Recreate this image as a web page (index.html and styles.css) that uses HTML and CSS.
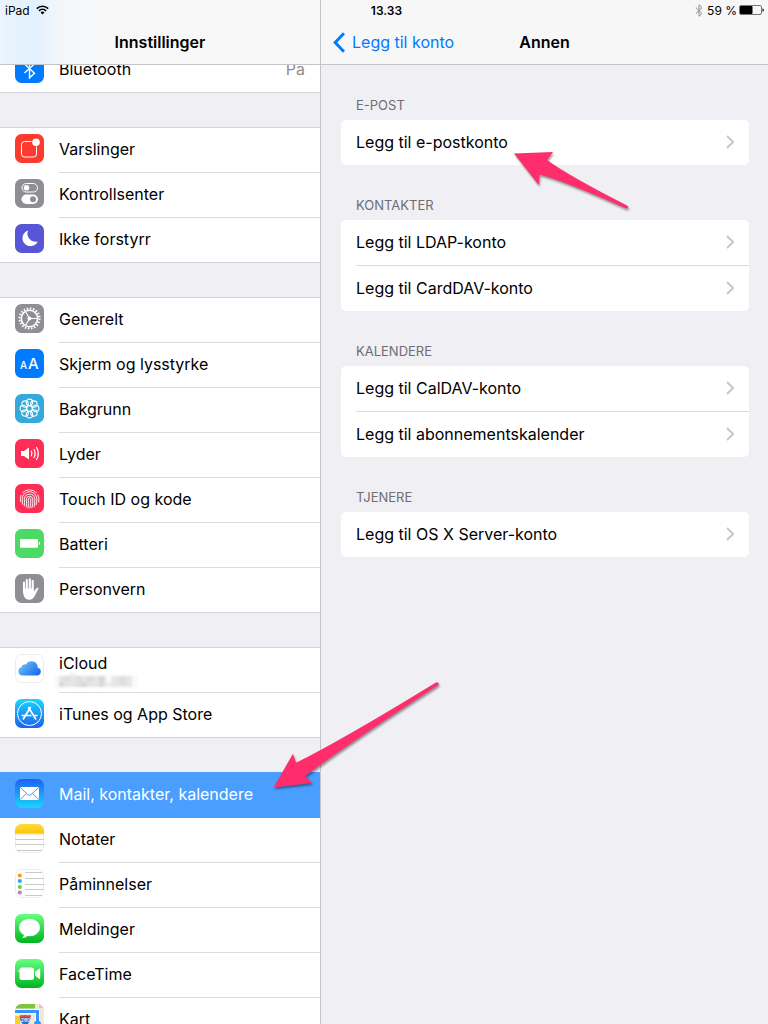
FILE: index.html
```html
<!DOCTYPE html>
<html lang="nb">
<head>
    <meta charset="utf-8">
    <title>Innstillinger</title>
    <link rel="stylesheet" href="styles.css">
</head>
<body>
    <div class="status-bar">
        <div class="status-left">
            <span>iPad</span>
            <svg width="13" height="10" viewBox="0 0 13 10" fill="none" stroke="#000" stroke-width="1.6">
                <path d="M0.8 3.6a8.2 8.2 0 0 1 11.4 0M2.9 5.8a5.2 5.2 0 0 1 7.2 0"/>
                <path d="M4.5 7.4a3 3 0 0 1 4 0L6.500 9.600z" fill="#000" stroke="none"/>
            </svg>
        </div>
        <div class="status-time">13.33</div>
        <div class="status-right">
            <svg width="8" height="13" viewBox="0 0 8 13" fill="none" stroke="#8e8e93" stroke-width="1">
                <path d="M0.800 3.500l6.200 6L4 12.300V0.800l3 2.800-6.200 6"/>
            </svg>
            <span>59 %</span>
            <svg width="25" height="10" viewBox="0 0 25 10">
                <rect x="0.500" y="0.500" width="22" height="9" rx="1.500" fill="none" stroke="#777"/>
                <rect x="1" y="1" width="12.500" height="8" rx="1"/>
                <path d="M23.500 3.200q1.300 0.400 1.300 1.800t-1.300 1.800z"/>
            </svg>
        </div>
    </div>

    <div class="app">
        <aside class="sidebar">
            <header class="header sidebar-header">
                <h1>Innstillinger</h1>
            </header>
            <nav class="sidebar-scroll">
                <ul class="menu-group">
                    <li>
                        <a href="#" class="menu-row">
                            <svg class="icon" viewBox="0 0 29 29">
                                <rect width="29" height="29" rx="6.500" fill="#007aff"/>
                                <path d="M9.500 10l10 9.200-5 4.600V5.200l5 4.600-10 9.200" fill="none" stroke="#fff" stroke-width="1.400"/>
                            </svg>
                            <span class="menu-label">Bluetooth <span class="menu-value">På</span></span>
                        </a>
                    </li>
                </ul>

                <ul class="menu-group">
                    <li>
                        <a href="#" class="menu-row">
                            <svg class="icon" viewBox="0 0 29 29">
                                <rect width="29" height="29" rx="6.500" fill="#ff3b30"/>
                                <path d="M16.500 7.500H9.500q-3 0-3 3v9.500q0 3 3 3h9q3 0 3-3v-7.500" fill="none" stroke="#fff" stroke-width="1"/>
                                <circle cx="21" cy="8.300" r="3.800" fill="#fff"/>
                            </svg>
                            <span class="menu-label">Varslinger</span>
                        </a>
                    </li>
                    <li>
                        <a href="#" class="menu-row">
                            <svg class="icon" viewBox="0 0 29 29">
                                <rect width="29" height="29" rx="6.500" fill="#8e8e93"/>
                                <rect x="7" y="4.500" width="15.500" height="8.500" rx="4.250" fill="none" stroke="#fff"/>
                                <circle cx="11.500" cy="8.750" r="2.800" fill="#fff"/>
                                <rect x="6.500" y="15.500" width="16.500" height="9.500" rx="4.750" fill="#fff"/>
                                <circle cx="18" cy="20.250" r="3" fill="#8e8e93"/>
                            </svg>
                            <span class="menu-label">Kontrollsenter</span>
                        </a>
                    </li>
                    <li>
                        <a href="#" class="menu-row">
                            <svg class="icon" viewBox="0 0 29 29">
                                <rect width="29" height="29" rx="6.500" fill="#5856d6"/>
                                <path d="M13.200 6.500A8 8 0 1 0 22.800 17.400A8 8 0 0 1 13.200 6.500z" fill="#fff"/>
                            </svg>
                            <span class="menu-label">Ikke forstyrr</span>
                        </a>
                    </li>
                </ul>

                <ul class="menu-group">
                    <li>
                        <a href="#" class="menu-row">
                            <svg class="icon" viewBox="0 0 29 29" fill="none" stroke="#fff">
                                <rect width="29" height="29" rx="6.500" fill="#8e8e93" stroke="none"/>
                                <circle cx="14.500" cy="14.500" r="10" stroke-width="2.200" stroke-dasharray="1.570 1.571"/>
                                <circle cx="14.500" cy="14.500" r="8.200" stroke-width="1.600"/>
                                <circle cx="14.500" cy="14.500" r="2" fill="#fff" stroke="none"/>
                                <path d="M14.500 14.500h8M14.500 14.500l-4-7M14.500 14.500l-4 7" stroke-width="1.100"/>
                            </svg>
                            <span class="menu-label">Generelt</span>
                        </a>
                    </li>
                    <li>
                        <a href="#" class="menu-row">
                            <svg class="icon" viewBox="0 0 29 29">
                                <rect width="29" height="29" rx="6.500" fill="#007aff"/>
                                <text x="5" y="19.500" class="icon-letter" font-size="10">A</text>
                                <text x="13" y="19.500" class="icon-letter" font-size="15">A</text>
                            </svg>
                            <span class="menu-label">Skjerm og lysstyrke</span>
                        </a>
                    </li>
                    <li>
                        <a href="#" class="menu-row">
                            <svg class="icon" viewBox="0 0 29 29" fill="none" stroke="#fff" stroke-width="1.100">
                                <rect width="29" height="29" rx="6.500" fill="#34aadc" stroke="none"/>
                                <circle cx="14.500" cy="8.300" r="3.200"/>
                                <circle cx="18.900" cy="10.100" r="3.200"/>
                                <circle cx="20.700" cy="14.500" r="3.200"/>
                                <circle cx="18.900" cy="18.900" r="3.200"/>
                                <circle cx="14.500" cy="20.700" r="3.200"/>
                                <circle cx="10.100" cy="18.900" r="3.200"/>
                                <circle cx="8.300" cy="14.500" r="3.200"/>
                                <circle cx="10.100" cy="10.100" r="3.200"/>
                                <circle cx="14.500" cy="14.500" r="2.800"/>
                            </svg>
                            <span class="menu-label">Bakgrunn</span>
                        </a>
                    </li>
                    <li>
                        <a href="#" class="menu-row">
                            <svg class="icon" viewBox="0 0 29 29" fill="none" stroke="#fff" stroke-width="1.200">
                                <rect width="29" height="29" rx="6.500" fill="#ff2d55" stroke="none"/>
                                <path d="M6 12h3l5-3.500v12L9 17H6z" fill="#fff" stroke="none"/>
                                <path d="M16.300 11.800q1.500 2.700 0 5.400M18.800 10q2.700 4.500 0 9M21.300 8q4 6.500 0 13"/>
                            </svg>
                            <span class="menu-label">Lyder</span>
                        </a>
                    </li>
                    <li>
                        <a href="#" class="menu-row">
                            <svg class="icon" viewBox="0 0 29 29" fill="none" stroke="#fff" stroke-width="0.900" stroke-linecap="round">
                                <rect width="29" height="29" rx="6.500" fill="#ff2d55" stroke="none"/>
                                <path d="M7.500 8.800a9.300 9.300 0 0 1 14 0M5.500 17.500q-0.700-3.500 0.500-6.300M23.800 18q0.700-4-0.800-7"/>
                                <path d="M7.400 20.200q0-2-0.200-5.200a7.300 7.300 0 0 1 14.600 0q0.200 3-0.600 5.800"/>
                                <path d="M9.300 21.800q0.500-3.500 0-7a5.300 5.300 0 0 1 10.500 0q0.300 4-0.700 8"/>
                                <path d="M11.200 23q0.700-4 0.100-8a3.300 3.300 0 0 1 6.500 0q0.300 4.500-0.800 8.700"/>
                                <path d="M13 24q0.900-4.500 0.300-9a1.300 1.300 0 0 1 2.500 0q0.200 4.500-0.800 9"/>
                            </svg>
                            <span class="menu-label">Touch ID og kode</span>
                        </a>
                    </li>
                    <li>
                        <a href="#" class="menu-row">
                            <svg class="icon" viewBox="0 0 29 29" fill="#fff">
                                <rect width="29" height="29" rx="6.500" fill="#4cd964"/>
                                <rect x="5" y="10" width="18" height="8.700" rx="0.800"/>
                                <path d="M23.800 12.700q1.400 0.300 1.400 1.700t-1.400 1.700z"/>
                            </svg>
                            <span class="menu-label">Batteri</span>
                        </a>
                    </li>
                    <li>
                        <a href="#" class="menu-row">
                            <svg class="icon" viewBox="0 0 29 29">
                                <rect width="29" height="29" rx="6.500" fill="#8e8e93"/>
                                <path d="M9 8.500v9M11.800 6v10M14.800 5.300v10M17.700 6.800v10" stroke="#fff" stroke-width="2.100" stroke-linecap="round"/>
                                <path d="M8 14.500h10.800v3.300l2.700-3.500q1.500-1.200 2.200-0.200l-3.500 6.900q-1.800 4.700-6 4.700-4 0-5.300-3.700-0.900-2.500-0.900-5z" fill="#fff"/>
                            </svg>
                            <span class="menu-label">Personvern</span>
                        </a>
                    </li>
                </ul>

                <ul class="menu-group">
                    <li>
                        <a href="#" class="menu-row">
                            <svg class="icon" viewBox="0 0 29 29">
                                <defs>
                                    <linearGradient id="cloud" x1="0" x2="1" y1="0" y2="0.600">
                                        <stop offset="0" stop-color="#7cc8fa"/>
                                        <stop offset="1" stop-color="#1b72ee"/>
                                    </linearGradient>
                                </defs>
                                <rect x="0.500" y="0.500" width="28" height="28" rx="6" fill="#fff" stroke="#ececec"/>
                                <path d="M7 21.500a4.200 4.200 0 0 1-0.500-8.200 3.500 3.500 0 0 1 4.600-2.800 6.200 6.200 0 0 1 11.600 3.200 4 4 0 0 1 0 7.800z" fill="url(#cloud)"/>
                            </svg>
                            <span class="menu-label two-line">
                                <span>iCloud</span>
                                <svg class="masked" width="84" height="16" viewBox="0 0 84 16">
                                    <path d="M0 2h84v12H0z" fill="#fafafa"/>
                                    <path d="M5 3h47v11H5zM58 3h20v11H58z" fill="#e6e6e6"/>
                                    <path d="M16 0h6v3h-6z" fill="#f0f0f0"/>
                                    <path d="M10 3h6v6h-6zM22 3h5v11h-5zM33 3h6v6h-6zM66 4h6v8h-6z" fill="#dedede"/>
                                    <path d="M5 9h5v5H5zM27 9h6v5h-6zM45 3h5v11h-5z" fill="#d9d9d9"/>
                                    <path d="M52 9h6v5h-6z" fill="#ececec"/>
                                </svg>
                            </span>
                        </a>
                    </li>
                    <li>
                        <a href="#" class="menu-row">
                            <svg class="icon" viewBox="0 0 29 29" fill="none" stroke="#fff">
                                <defs>
                                    <linearGradient id="store" x1="0" x2="0" y1="0" y2="1">
                                        <stop offset="0" stop-color="#1ad5fd"/>
                                        <stop offset="1" stop-color="#1d62f0"/>
                                    </linearGradient>
                                </defs>
                                <rect width="29" height="29" rx="6.500" fill="url(#store)" stroke="none"/>
                                <circle cx="14.500" cy="14.500" r="12" stroke-width="1"/>
                                <path d="M13.300 8l7.700 12.500M15.700 8L8 20.500" stroke-width="1.700"/>
                                <path d="M6.500 16.500h10M19.500 16.500h3" stroke-width="1.500"/>
                            </svg>
                            <span class="menu-label">iTunes og App Store</span>
                        </a>
                    </li>
                </ul>

                <ul class="menu-group">
                    <li>
                        <a href="#" class="menu-row selected">
                            <svg class="icon" viewBox="0 0 29 29">
                                <defs>
                                    <linearGradient id="mail" x1="0" x2="0" y1="0" y2="1">
                                        <stop offset="0" stop-color="#1d62f0"/>
                                        <stop offset="1" stop-color="#1ad5fd"/>
                                    </linearGradient>
                                </defs>
                                <rect width="29" height="29" rx="6.500" fill="url(#mail)"/>
                                <rect x="5" y="8" width="19" height="13" rx="1" fill="#fff"/>
                                <path d="M5.300 8.500l7.700 7.200q1.500 1.300 3 0l7.700-7.200M5.300 20.500l6.200-6.200M23.700 20.500l-6.200-6.200" fill="none" stroke="#259af6" stroke-width="0.900"/>
                            </svg>
                            <span class="menu-label">Mail, kontakter, kalendere</span>
                        </a>
                    </li>
                    <li>
                        <a href="#" class="menu-row">
                            <svg class="icon" viewBox="0 0 29 29">
                                <defs>
                                    <linearGradient id="notes" x1="0" x2="0" y1="0" y2="1">
                                        <stop offset="0" stop-color="#ffdb3d"/>
                                        <stop offset="1" stop-color="#fec402"/>
                                    </linearGradient>
                                </defs>
                                <rect x="0.500" y="0.500" width="28" height="28" rx="6" fill="#fff" stroke="#ececec"/>
                                <path d="M0 9.500v-3A6.500 6.500 0 0 1 6.500 0h16A6.500 6.500 0 0 1 29 6.500v3z" fill="url(#notes)"/>
                                <path d="M0 10h29" stroke="#d9b85c" stroke-width="0.500"/>
                                <path d="M0 15.500h29M0 20.500h29M2 26.500h25" stroke="#c9c9c9"/>
                            </svg>
                            <span class="menu-label">Notater</span>
                        </a>
                    </li>
                    <li>
                        <a href="#" class="menu-row">
                            <svg class="icon" viewBox="0 0 29 29">
                                <rect x="0.500" y="0.500" width="28" height="28" rx="6" fill="#fff" stroke="#ececec"/>
                                <path d="M10 3.500h17M10 9.500h19M10 15.500h19M10 20.500h19M10 26.500h17" stroke="#c9c9c9"/>
                                <circle cx="4.800" cy="6.500" r="2.100" fill="#ff9a1f"/>
                                <circle cx="4.800" cy="12" r="2.100" fill="#29a8f5"/>
                                <circle cx="4.800" cy="18" r="2.100" fill="#63da38"/>
                                <circle cx="4.800" cy="23.500" r="2.100" fill="#cc73e1"/>
                            </svg>
                            <span class="menu-label">Påminnelser</span>
                        </a>
                    </li>
                    <li>
                        <a href="#" class="menu-row">
                            <svg class="icon" viewBox="0 0 29 29">
                                <defs>
                                    <linearGradient id="green" x1="0" x2="0" y1="0" y2="1">
                                        <stop offset="0" stop-color="#67ff81"/>
                                        <stop offset="1" stop-color="#01b41f"/>
                                    </linearGradient>
                                </defs>
                                <rect width="29" height="29" rx="6.500" fill="url(#green)"/>
                                <ellipse cx="14.500" cy="13.500" rx="10.500" ry="8.700" fill="#fff"/>
                                <path d="M9 19.500q0.300 2.800-1.800 4.500 4 0 6-3z" fill="#fff"/>
                            </svg>
                            <span class="menu-label">Meldinger</span>
                        </a>
                    </li>
                    <li>
                        <a href="#" class="menu-row">
                            <svg class="icon" viewBox="0 0 29 29" fill="#fff">
                                <rect width="29" height="29" rx="6.500" fill="url(#green)"/>
                                <rect x="4.500" y="8.500" width="14.500" height="12.500" rx="2.500"/>
                                <path d="M20 13l4-3.300q1.200-0.700 1.200 0.800v8.500q0 1.500-1.200 0.800L20 16.500z"/>
                                <circle cx="3.800" cy="12" r="0.800"/>
                            </svg>
                            <span class="menu-label">FaceTime</span>
                        </a>
                    </li>
                    <li>
                        <a href="#" class="menu-row">
                            <svg class="icon" viewBox="0 0 29 29">
                                <defs>
                                    <clipPath id="tile"><rect width="29" height="29" rx="6.500"/></clipPath>
                                </defs>
                                <g clip-path="url(#tile)">
                                    <path d="M0 0h29v29H0z" fill="#efe9dc"/>
                                    <path d="M0 0h20v4.500H0z" fill="#7cc63f"/>
                                    <path d="M24 0h5v4h-5z" fill="#f9b7c5"/>
                                    <path d="M0 12h5v17H0z" fill="#fdd022"/>
                                    <path d="M0 7.500h22.500V29" fill="none" stroke="#fff" stroke-width="5"/>
                                    <path d="M0 7.500h22.500V18" fill="none" stroke="#3395ff" stroke-width="3"/>
                                    <path d="M5 11q2 1 5 0 3 1 5.500 0 0.500 8-5 10.500Q4 19 5 11z" fill="#2d70c8"/>
                                    <path d="M5 11q2 1 5 0 3 1 5.500 0v2H5z" fill="#e8463b"/>
                                    <text x="5.800" y="18" class="icon-letter" font-size="5">280</text>
                                    <circle cx="22.500" cy="20" r="3.500" fill="#3395ff"/>
                                </g>
                            </svg>
                            <span class="menu-label">Kart</span>
                        </a>
                    </li>
                </ul>
            </nav>
        </aside>

        <main class="detail">
            <header class="header detail-header">
                <a href="#" class="back-link">
                    <svg width="12" height="21" viewBox="0 0 12 21" fill="none" stroke="#007aff" stroke-width="3">
                        <path d="M11 1.200L2.200 10.500l8.800 9.300"/>
                    </svg>
                    Legg til konto
                </a>
                <h2>Annen</h2>
            </header>

            <div class="detail-content">
                <section>
                    <h3 class="section-title">E-post</h3>
                    <div class="card">
                        <a href="#" class="card-row">Legg til e-postkonto <svg class="chevron" viewBox="0 0 8 14"><path d="M1 1l6 6-6 6"/></svg></a>
                    </div>
                </section>
                <section>
                    <h3 class="section-title">Kontakter</h3>
                    <div class="card">
                        <a href="#" class="card-row">Legg til LDAP-konto <svg class="chevron" viewBox="0 0 8 14"><path d="M1 1l6 6-6 6"/></svg></a>
                        <a href="#" class="card-row">Legg til CardDAV-konto <svg class="chevron" viewBox="0 0 8 14"><path d="M1 1l6 6-6 6"/></svg></a>
                    </div>
                </section>
                <section>
                    <h3 class="section-title">Kalendere</h3>
                    <div class="card">
                        <a href="#" class="card-row">Legg til CalDAV-konto <svg class="chevron" viewBox="0 0 8 14"><path d="M1 1l6 6-6 6"/></svg></a>
                        <a href="#" class="card-row">Legg til abonnementskalender <svg class="chevron" viewBox="0 0 8 14"><path d="M1 1l6 6-6 6"/></svg></a>
                    </div>
                </section>
                <section>
                    <h3 class="section-title">Tjenere</h3>
                    <div class="card">
                        <a href="#" class="card-row">Legg til OS X Server-konto <svg class="chevron" viewBox="0 0 8 14"><path d="M1 1l6 6-6 6"/></svg></a>
                    </div>
                </section>
            </div>
        </main>
    </div>

    <!-- pointer arrows -->
    <svg class="arrow arrow-account" width="120" height="64" viewBox="0 0 120 64">
        <path d="M2 3.500L41 2l-6 8q22 16 80 45.500 2 1.200 1 2.300t-3 0.300Q52 31 27.500 24.600L26.700 35z"/>
    </svg>
    <svg class="arrow arrow-mail" width="170" height="112" viewBox="0 0 170 112">
        <path d="M1.500 107.500L21 73.700l3 9Q70 60 163.500 2.700q2-1 3 0.300t-0.800 2.500Q80 61 33.300 96l6.700 7z"/>
    </svg>
</body>
</html>
```

FILE: styles.css
```css
* {
    box-sizing: border-box;
}
body {
    font-family: Inter, "Liberation Sans", sans-serif;
    font-size: 16px;
    margin: 0;
    color: #000;
    background: #efeff4;
    position: relative;
    overflow: hidden;
}
h1, h2, h3, ul {
    margin: 0;
    padding: 0;
}
ul {
    list-style: none;
}
a {
    color: inherit;
    text-decoration: none;
}
svg {
    flex: none;
}

/* status bar, floats over both headers */
.status-bar {
    position: absolute;
    top: 0;
    left: 0;
    right: 0;
    z-index: 2;
    display: grid;
    grid-template-columns: 1fr auto 1fr;
    align-items: center;
    height: 20px;
    padding-left: 5px;
    font-size: 12px;
}
.status-left,
.status-right {
    display: flex;
    align-items: center;
    gap: 6px;
}
.status-right {
    justify-content: flex-end;
    gap: 4px;
    padding-right: 4px;
}
.status-right span {
    margin-right: -2px;
}
.status-time {
    font-weight: 600;
}

.app {
    display: flex;
    height: 100vh;
}
.header {
    flex: none;
    height: 65px;
    padding-top: 20px;
    background: #f7f7f8;
    border-bottom: 1px solid #c4c4c9;
}
.header h1,
.header h2 {
    font-size: 16px;
    font-weight: 600;
    line-height: 44px;
    text-align: center;
}

/* sidebar */
.sidebar {
    display: flex;
    flex-direction: column;
    flex: none;
    width: 321px;
    border-right: 1px solid #c4c4c9;
}
.sidebar-header {
    background: linear-gradient(90deg, #ecf4fc 0, #e4f1fe 20px, #e4f1fe 36px, #f3f7fa 60px, #f8f8f8 110px);
}
.sidebar-scroll {
    flex: 1;
    min-height: 0;
    overflow: hidden;
}
.menu-group {
    margin-bottom: 34px;
    background: #fff;
    border-top: 1px solid #d3d3d7;
}
.menu-group:first-child {
    margin-top: -18px; /* scrolled under the header */
}
.menu-row {
    display: flex;
    gap: 15px;
    height: 45px;
    padding-left: 15px;
}
.icon {
    width: 29px;
    height: 29px;
    margin-top: 6px;
}
.icon-letter {
    font-family: Inter, sans-serif;
    font-weight: 500;
    fill: #fff;
}
.menu-label {
    display: flex;
    flex: 1;
    align-items: center;
    justify-content: space-between;
    padding-right: 15px;
    padding-bottom: 2px;
    border-bottom: 1px solid #dcdce0;
}
.menu-group li:last-child .menu-row {
    border-bottom: 1px solid #d3d3d7;
}
.menu-group li:last-child .menu-label {
    border-bottom: none;
}
.menu-value {
    color: #8e8e93;
}
.two-line {
    flex-direction: column;
    align-items: flex-start;
    justify-content: flex-start;
    padding-top: 5px;
    line-height: 20px;
}
.masked {
    margin-left: -5px;
    filter: blur(1px);
}
.menu-row.selected {
    height: 46px;
    margin-top: -1px;
    padding-top: 1px;
    color: #fff;
    background: #4a9eff;
}
.selected .menu-label {
    border-color: #4a9eff;
}

/* detail pane */
.detail {
    flex: 1;
    min-width: 0;
}
.detail-header {
    display: grid;
    grid-template-columns: 1fr auto 1fr;
    padding-left: 12px;
    padding-right: 12px;
}
.back-link {
    display: flex;
    align-items: center;
    gap: 7px;
    color: #007aff;
    white-space: nowrap;
}
.detail-content {
    padding: 0 19px 0 20px;
}
.section-title {
    height: 55px;
    padding: 32px 15px 0;
    color: #6d6d72;
    font-size: 13px;
    font-weight: 400;
    line-height: 16px;
    text-transform: uppercase;
}
.card {
    background: #fff;
    border-radius: 5px;
    padding-left: 15px;
}
.card-row {
    display: flex;
    align-items: center;
    justify-content: space-between;
    box-sizing: content-box;
    height: 43px;
    padding-right: 15px;
    padding-bottom: 2px;
}
.card-row + .card-row {
    border-top: 1px solid #dcdce0;
}
.chevron {
    width: 8px;
    height: 14px;
    fill: none;
    stroke: #c7c7cc;
    stroke-width: 2;
}

.arrow {
    position: absolute;
    z-index: 3;
    fill: #ff2d6b;
    filter: drop-shadow(1px 2px 1px rgba(0,0,0,0.4));
    pointer-events: none;
}
.arrow-account {
    left: 512px;
    top: 150px;
}
.arrow-mail {
    left: 272px;
    top: 680px;
}
```
